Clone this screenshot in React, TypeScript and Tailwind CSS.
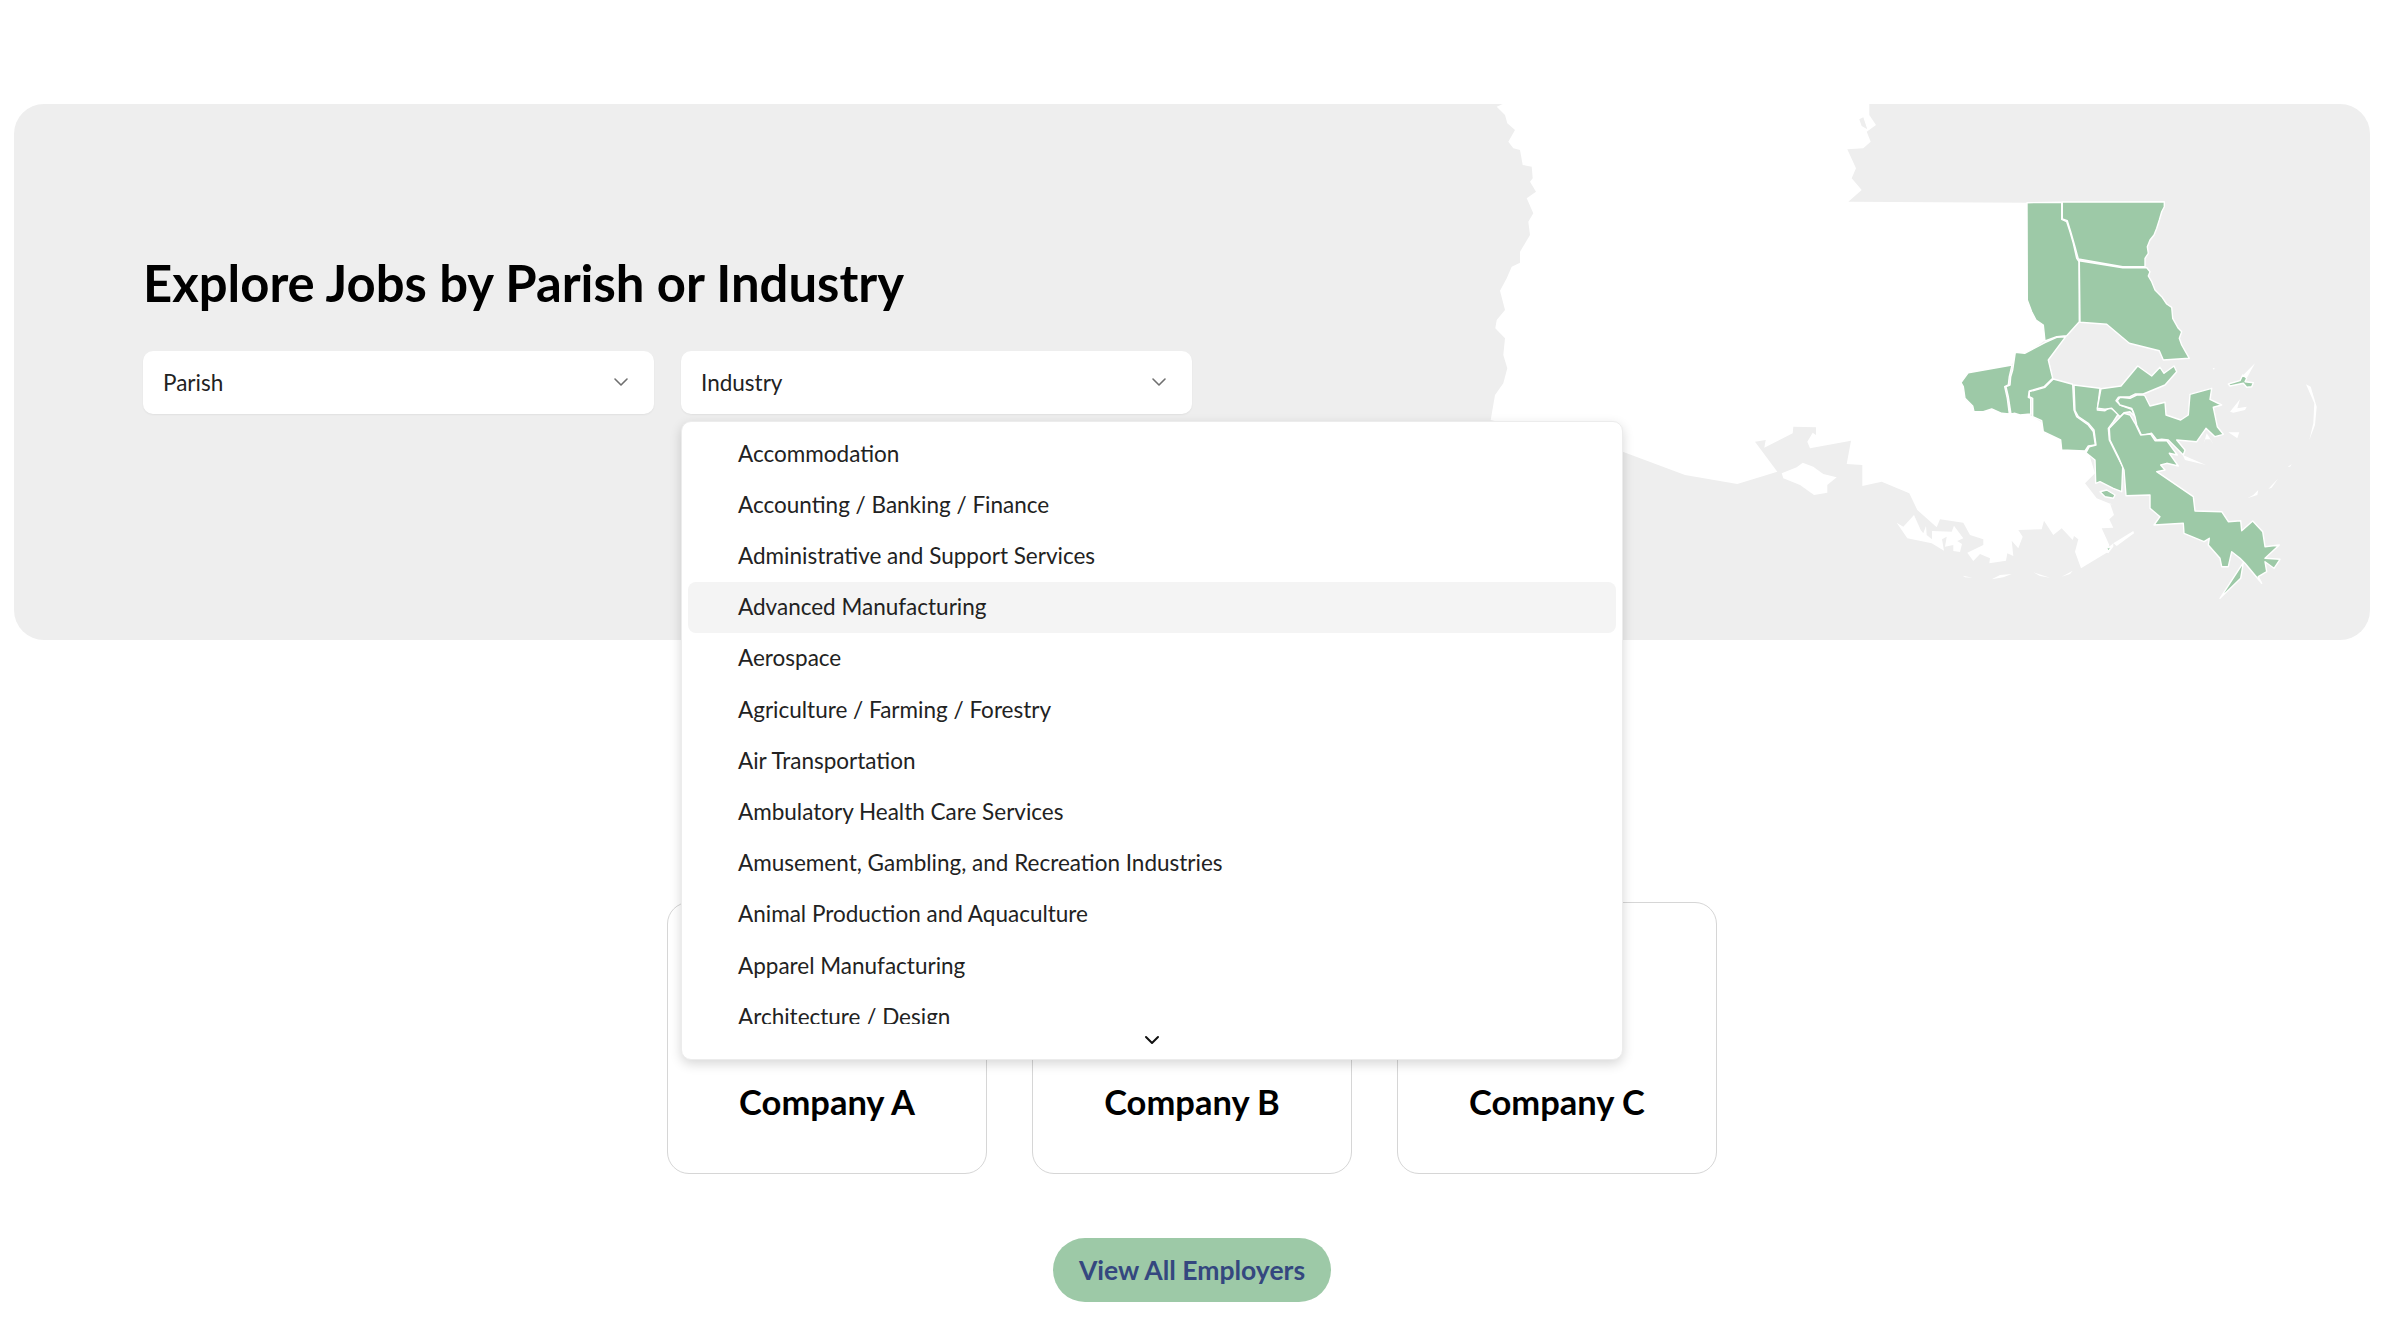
import { ChevronDown } from "lucide-react";

type Pt = [number, number];

// each crop I traced from has its own origin, all at 3x
const from = (ox: number, oy: number, pts: Pt[]): Pt[] =>
  pts.map(([x, y]) => [ox + x / 3, oy + y / 3]);
const toStr = (pts: Pt[]) => pts.map(([x, y]) => `${x.toFixed(1)},${y.toFixed(1)}`).join(" ");
const z2 = (pts: Pt[]) => toStr(from(1900, 190, pts));
const z8 = (pts: Pt[]) => toStr(from(1880, 480, pts));

const land: Pt[] = [
  ...from(1470, 100, [
    [98, 12], [80, 20], [105, 45], [112, 70], [135, 90], [115, 125], [130, 145], [150, 150], [158, 195], [185, 200],
    [188, 235], [180, 245], [198, 275], [170, 295], [190, 340], [175, 365], [180, 405], [150, 455], [150, 488], [125, 500],
    [110, 535], [90, 572], [105, 630], [80, 660], [76, 685], [105, 715], [100, 765], [112, 805], [100, 850], [75, 885], [62, 960],
  ]),
  ...from(1620, 410, [
    [8, 125], [195, 195], [352, 222], [472, 185], [405, 95], [437, 90], [433, 113], [518, 70], [520, 50], [588, 52],
    [588, 75], [578, 68], [562, 95], [570, 115], [693, 92], [680, 162], [727, 165], [727, 228], [785, 215], [868, 250],
  ]),
  ...from(1880, 480, [
    [112, 90], [170, 142], [180, 118], [250, 128], [270, 165], [310, 178], [310, 195], [262, 218], [280, 243], [300, 222],
    [330, 235], [328, 250], [378, 242], [382, 220], [400, 228], [395, 182], [415, 205], [428, 170], [415, 150], [485, 148],
    [492, 122], [520, 165], [545, 145], [578, 180], [582, 168], [595, 178], [585, 215], [603, 265], [680, 218], [688, 195],
    [665, 145], [700, 143], [688, 118], [702, 105], [690, 70],
  ]),
  ...from(1900, 190, [
    [640, 945], [590, 925], [555, 880], [585, 850], [560, 770], [430, 700], [350, 650], [200, 600], [340, 520], [450, 440],
    [420, 300], [381, 38],
  ]),
  ...from(1830, 100, [
    [55, 305], [95, 270], [65, 235], [78, 205], [52, 148], [100, 145], [122, 125], [110, 95], [138, 75], [118, 45], [118, 12],
  ]),
];

const parishes: Pt[][] = [
  [[381, 38], [485, 37], [485, 88], [500, 95], [510, 125], [520, 160], [530, 205], [537, 215], [538, 395], [500, 437], [470, 440], [435, 453], [430, 405], [408, 390], [395, 365], [382, 330]],
  [[487, 36], [793, 35], [793, 50], [785, 65], [778, 90], [770, 115], [762, 135], [750, 150], [742, 170], [745, 190], [735, 205], [735, 230], [668, 230], [535, 207], [525, 170], [512, 125], [502, 92], [487, 87]],
  [[538, 212], [668, 233], [740, 233], [750, 245], [745, 258], [755, 275], [765, 300], [785, 320], [800, 342], [815, 352], [818, 385], [835, 415], [845, 425], [838, 445], [845, 465], [868, 505], [790, 510], [778, 482], [688, 460], [620, 403], [540, 397]],
  [[205, 548], [336, 525], [328, 560], [325, 585], [314, 590], [322, 625], [328, 672], [305, 670], [275, 657], [250, 665], [222, 665], [218, 648], [195, 625], [190, 590], [183, 578]],
  [[346, 487], [374, 490], [435, 458], [470, 442], [497, 440], [445, 510], [458, 565], [432, 590], [388, 603], [385, 622], [392, 625], [392, 672], [360, 675], [345, 670], [333, 672], [325, 620], [318, 590], [330, 585], [332, 560], [338, 540]],
  [[460, 567], [518, 583], [522, 660], [530, 680], [565, 705], [580, 725], [586, 765], [565, 768], [555, 783], [485, 780], [482, 750], [430, 725], [425, 692], [398, 680], [398, 625], [388, 620], [388, 605], [435, 592]],
  [[522, 585], [600, 595], [592, 660], [615, 662], [630, 652], [655, 672], [640, 695], [625, 715], [628, 750], [650, 795], [668, 830], [665, 905], [640, 895], [600, 875], [587, 880], [585, 810], [558, 788], [568, 770], [588, 765], [582, 720], [565, 700], [535, 680], [525, 662]],
  [[603, 596], [663, 588], [713, 528], [755, 558], [780, 532], [792, 550], [822, 528], [830, 545], [795, 585], [730, 612], [705, 612], [690, 620], [655, 622], [648, 632], [660, 645], [695, 658], [705, 680], [690, 665], [672, 668], [660, 680], [635, 655], [615, 658], [592, 655]],
  [[735, 618], [750, 648], [795, 637], [798, 675], [842, 690], [865, 675], [870, 613], [935, 595], [930, 628], [965, 645], [940, 652], [952, 710], [970, 733], [945, 740], [918, 715], [890, 755], [830, 750], [855, 780], [850, 795], [805, 750], [785, 748], [770, 750], [755, 730], [725, 737], [710, 705], [705, 680], [700, 665], [695, 655], [660, 645], [652, 632], [660, 622], [690, 625], [710, 615], [730, 615]],
  [[660, 682], [672, 670], [690, 675], [705, 700], [722, 735], [752, 732], [765, 752], [800, 752], [832, 795], [808, 790], [835, 828], [800, 820], [782, 825], [795, 840], [770, 845], [880, 920], [885, 963], [965, 965], [985, 995], [1022, 992], [1025, 1022], [1058, 993], [1088, 1025], [1095, 1070], [1138, 1065], [1095, 1105], [1140, 1108], [1122, 1135], [1095, 1115], [1100, 1145], [1075, 1160], [1085, 1180], [1035, 1120], [1020, 1105], [995, 1085], [985, 1130], [965, 1130], [960, 1105], [925, 1065], [928, 1045], [912, 1055], [852, 1030], [850, 1000], [762, 1005], [780, 980], [750, 955], [750, 915], [678, 917], [672, 840], [655, 800], [630, 750], [628, 715]],
  [[1030, 1118], [1022, 1165], [960, 1225]],
  [[600, 905], [620, 900], [645, 915], [640, 925], [615, 920]],
  [[985, 582], [1020, 572], [1028, 555], [1040, 565], [1035, 575], [1060, 578], [1055, 590], [1040, 592], [1030, 580], [1005, 585], [990, 588]],
  [[620, 1075], [635, 1068], [625, 1085]],
];

// bits of coast and barrier islands, white on the grey
const whiteIslands: Pt[][] = [
  [[1030, 555], [1065, 520], [1040, 565]],
  [[990, 665], [1020, 628], [1012, 655], [1040, 650], [1035, 660], [1000, 668]],
  [[985, 727], [1018, 727], [1012, 745]],
  [[848, 795], [918, 825], [855, 810]],
  [[910, 765], [920, 730], [942, 765], [930, 748], [916, 748]],
  [[1218, 583], [1232, 590], [1250, 650], [1245, 705], [1228, 750], [1240, 700], [1243, 640]],
  [[1222, 760], [1185, 808], [1195, 795]],
  [[1163, 830], [1175, 823], [1170, 830]],
  [[1135, 865], [1105, 897], [1115, 893]],
  [[1075, 900], [1072, 915], [1042, 925], [1060, 915]],
  [[640, 1060], [700, 1023], [702, 1030], [650, 1068]],
  [[612, 1085], [640, 1060], [640, 1070], [625, 1090]],
  [[938, 535], [944, 533], [942, 540]],
];

const coastIslands: Pt[][] = [
  [[50, 128], [70, 140], [102, 105], [122, 150], [130, 160], [138, 138], [140, 165], [156, 178], [156, 153], [215, 155], [222, 137], [250, 175], [232, 183], [246, 192], [240, 216], [220, 213], [220, 195], [195, 200], [200, 170], [186, 178], [192, 212], [155, 190], [82, 175]],
  [[248, 287], [278, 293], [255, 292]],
  [[335, 298], [360, 285], [395, 282], [370, 292]],
  [[460, 277], [510, 293], [480, 288]],
  [[545, 290], [578, 272], [570, 282]],
];

const lakeIsland: Pt[] = [[485, 190], [530, 172], [548, 158], [580, 170], [610, 192], [650, 202], [622, 225], [622, 248], [582, 255], [540, 225], [490, 205]];

function ParishMap() {
  return (
    <svg
      className="absolute inset-0 w-full h-full"
      viewBox="14 104 2356 536"
      preserveAspectRatio="none"
    >
      <polygon points={toStr(land)} fill="#ffffff" />
      <polygon points={toStr(from(1620, 410, lakeIsland))} fill="#ffffff" />
      <polygon points={toStr(from(1830, 100, [[88, 58], [100, 52], [112, 88], [95, 78]]))} fill="#eeeeee" />
      {coastIslands.map((p, i) => (
        <polygon key={i} points={z8(p)} fill="#ffffff" />
      ))}
      {whiteIslands.map((p, i) => (
        <polygon key={i} points={z2(p)} fill="#ffffff" />
      ))}
      {parishes.map((p, i) => (
        <polygon key={i} points={z2(p)} fill="#9dc9a7" stroke="#ffffff" strokeWidth={1.4} strokeLinejoin="round" />
      ))}
    </svg>
  );
}

const industries = [
  "Accommodation",
  "Accounting / Banking / Finance",
  "Administrative and Support Services",
  "Advanced Manufacturing",
  "Aerospace",
  "Agriculture / Farming / Forestry",
  "Air Transportation",
  "Ambulatory Health Care Services",
  "Amusement, Gambling, and Recreation Industries",
  "Animal Production and Aquaculture",
  "Apparel Manufacturing",
  "Architecture / Design",
];

function SelectBox({ label }: { label: string }) {
  return (
    <div className="w-[511px] h-[63px] flex items-center justify-between pl-5 pr-[21px] bg-white rounded-[10px] shadow-[0_1px_2px_rgba(0,0,0,0.06)] text-[22.5px] text-[#222222]">
      <span>{label}</span>
      <ChevronDown size={24} strokeWidth={1.6} className="text-[#6f6f6f] -mt-0.5" />
    </div>
  );
}

function IndustryMenu() {
  return (
    <div className="absolute left-0 top-[70px] z-10 w-[942px] h-[639px] px-[6px] pt-[6px] bg-white rounded-[10px] border border-[#ececec] shadow-[0_4px_12px_rgba(0,0,0,0.16)]">
      <div className="h-[596px] overflow-hidden">
        {industries.map((name) => (
          <div
            key={name}
            className={`h-[51.2px] flex items-center pl-[50px] rounded-[8px] text-[22.5px] text-[#222222] ${
              name === "Advanced Manufacturing" ? "bg-[#f4f4f4]" : ""
            }`}
          >
            {name}
          </div>
        ))}
      </div>
      <div className="flex justify-center pt-[4px]">
        <ChevronDown size={24} strokeWidth={2} className="text-[#111111]" />
      </div>
    </div>
  );
}

export default function App() {
  return (
    <div className="min-h-[1338px] bg-white pt-[104px] pr-[8px] font-['Lato','Liberation_Sans',sans-serif]">
      <section className="relative mx-[14px] h-[536px] bg-[#eeeeee] rounded-[30px] overflow-hidden">
        <ParishMap />
      </section>

      {/* heading + selects sit on top of the map layer, menu has to escape the hero clip */}
      <div className="relative -mt-[536px] h-[536px] pl-[143px] pt-[147px]">
        <h1 className="text-[50.8px] leading-[64px] font-bold text-black">
          Explore Jobs by Parish or Industry
        </h1>
        <div className="flex gap-[27px] mt-[36px]">
          <SelectBox label="Parish" />
          <div className="relative">
            <SelectBox label="Industry" />
            <IndustryMenu />
          </div>
        </div>
      </div>

      <div className="flex justify-center gap-[45px] mt-[262px]">
        {["Company A", "Company B", "Company C"].map((name) => (
          <div
            key={name}
            className="w-[320px] h-[272px] flex items-end justify-center pb-[49px] rounded-[22px] border border-[#d6d6d6] text-[34.5px] leading-[44px] font-bold text-black"
          >
            {name}
          </div>
        ))}
      </div>

      <div className="flex justify-center mt-[64px]">
        <a className="h-[64px] w-[278px] pt-[2px] flex items-center justify-center rounded-full bg-[#9dc9a7] text-[26.5px] font-bold text-[#34477f]">
          View All Employers
        </a>
      </div>
    </div>
  );
}
